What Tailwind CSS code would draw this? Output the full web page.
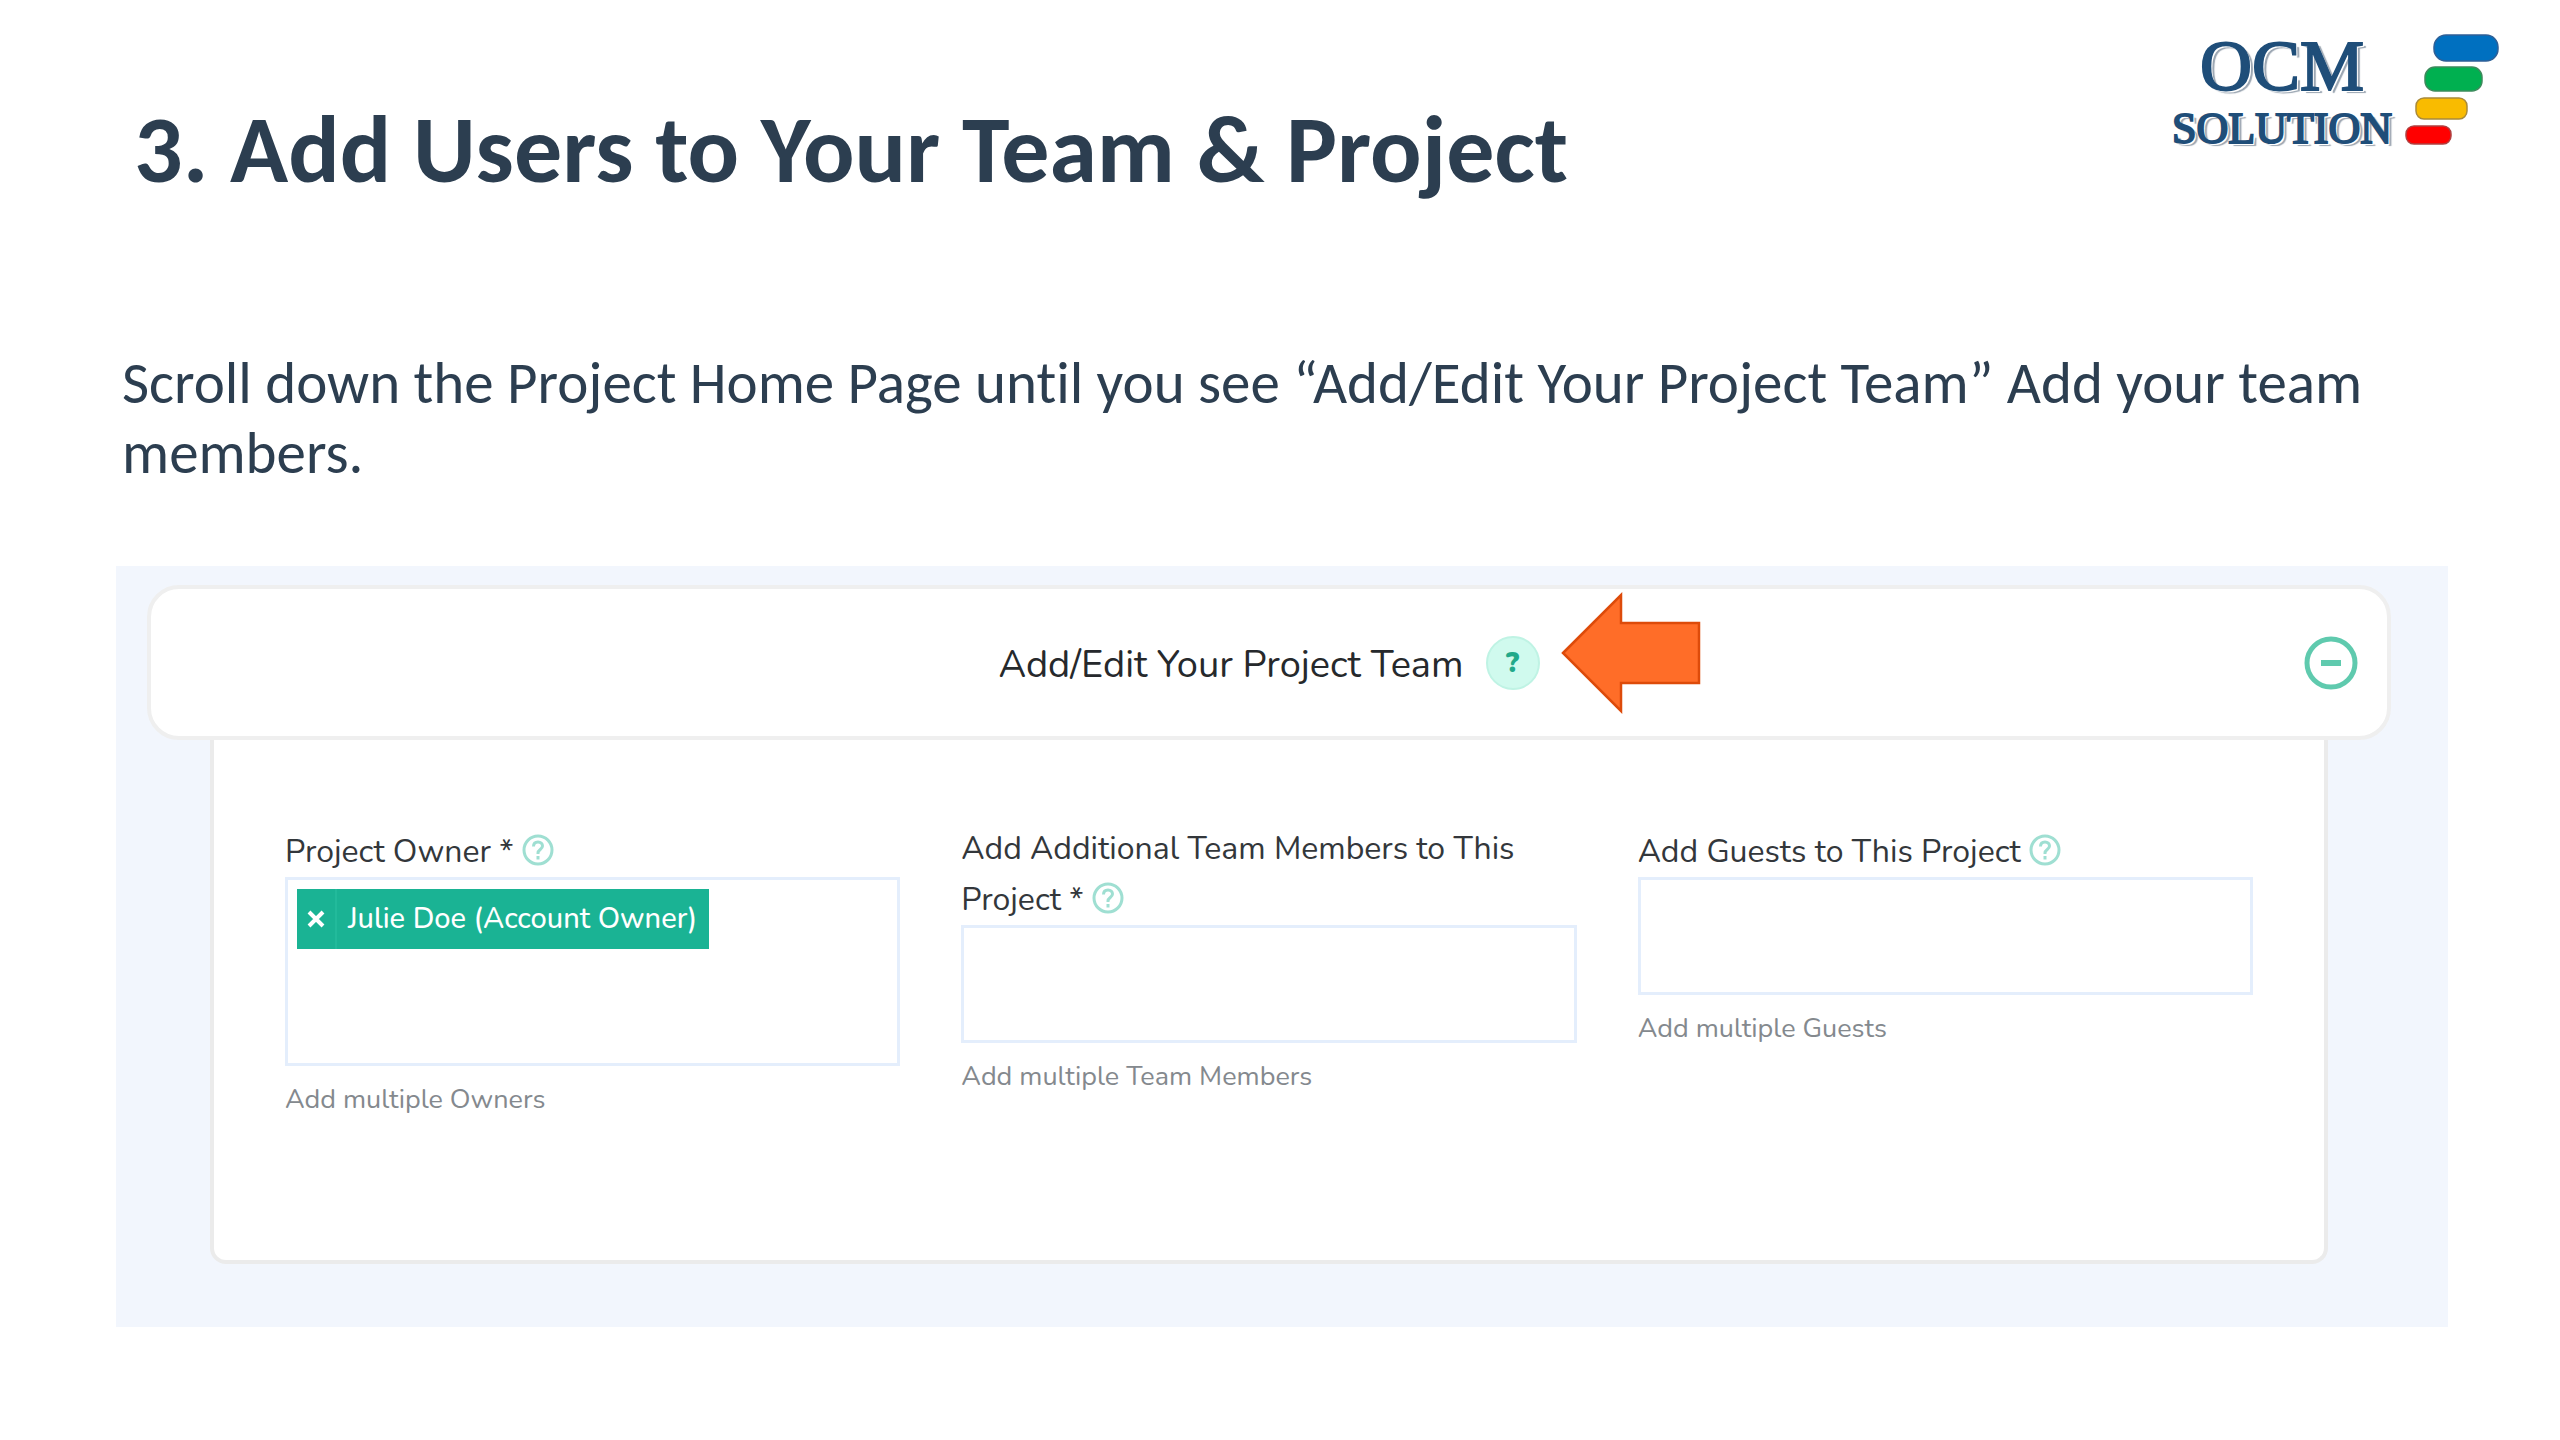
<!DOCTYPE html>
<html lang="en">
<head>
  <meta charset="UTF-8">
  <meta name="viewport" content="width=device-width, initial-scale=1">
  <title>Add Users to Your Team &amp; Project</title>
  <script src="https://cdn.jsdelivr.net/npm/@tailwindcss/browser@4"></script>
</head>
<body class="bg-white min-h-screen font-[Calibri,Carlito,Lato,sans-serif] text-[#2c3e50]">

  <!-- Slide header -->
  <header class="flex items-start justify-between pt-8 pl-[134px] pr-[60px]">
    <h1 class="pt-[70px] text-[96px] leading-[96px] font-bold">3. Add Users to Your Team &amp; Project</h1>

    <!-- Logo -->
    <div class="flex items-start gap-3">
      <div class="flex flex-col items-center gap-2 pt-1 font-['Liberation_Serif',serif] text-[#1f4e79] [-webkit-text-stroke:2px_#1f4e79] [text-shadow:2px_2px_0_#fff,4px_3px_1px_#9aa5b1]">
        <span class="text-[72px] leading-[60px]">OCM</span>
        <span class="text-[44px] leading-[50px]">SOLUTION</span>
      </div>
      <svg class="w-24 h-[114px]" viewBox="0 0 96 114" stroke-width="1.5" aria-hidden="true">
        <rect x="30" y="3" width="64" height="26" rx="12" fill="#0070c0" stroke="#2f5f96"/>
        <rect x="21" y="35" width="57" height="24" rx="10" fill="#00b050" stroke="#3d8a5c"/>
        <rect x="12" y="66" width="51" height="21" rx="8" fill="#f9bb00" stroke="#a98a3a"/>
        <rect x="2" y="94" width="45" height="18" rx="8" fill="#ff0000" stroke="#b04040"/>
      </svg>
    </div>
  </header>

  <main class="pl-[116px] pr-[112px]">
    <p class="mt-[150px] pl-[6px] text-[59px] leading-[70px] [font-variant-ligatures:none]">Scroll down the Project Home Page until you see “Add/Edit Your Project Team” Add your team members.</p>

    <!-- Project team panel -->
    <section class="mt-[78px] pt-[19px] pb-[63px] bg-[#f2f6fd] font-[Nunito,'Open_Sans',sans-serif] text-[#33373b]">
      <div class="ml-[31px] mr-[57px] h-[155px] px-[29px] grid grid-cols-[1fr_auto_1fr] items-center bg-white border-4 border-[#efefef] rounded-[32px]">
        <div class="relative col-start-2 flex items-center gap-[22px]">
          <h2 class="pt-1 text-[38px] leading-[52px] text-[#26292c]">Add/Edit Your Project Team</h2>
          <button type="button" aria-label="Help" class="size-[54px] rounded-full bg-[#d0faee] border-2 border-[#bff3e4] text-[28px] leading-none font-black text-[#22a98a]">?</button>
          <svg class="absolute left-full -bottom-6 ml-5 w-[142px] h-[124px]" viewBox="0 0 142 124" aria-hidden="true">
            <path d="M3 62 L61 4 V32 H139 V92 H61 V120 Z" fill="#ff6d28" stroke="#dd4b0a" stroke-width="2.5"/>
          </svg>
        </div>
        <button type="button" aria-label="Collapse" class="justify-self-end">
          <svg class="size-[54px]" viewBox="0 0 54 54" fill="none" stroke="#5fcaae" stroke-width="5">
            <circle cx="27" cy="27" r="24"/>
            <path d="M17 27 H37" stroke-width="6"/>
          </svg>
        </button>
      </div>

      <div class="ml-[94px] mr-[120px] pt-[85px] pb-[140px] px-[71px] grid grid-cols-3 gap-x-[61px] items-start bg-white border-4 border-t-0 border-[#ebebeb] rounded-b-2xl">
        <div>
          <div class="mb-px text-[32px] leading-[48px]">
            <label for="owner">Project Owner *</label>
            <button type="button" aria-label="About project owner" class="mt-[9px] align-[-4px]">
              <svg class="size-8" viewBox="0 0 32 32" fill="none" stroke="#9fdfd2" stroke-width="3">
                <circle cx="16" cy="16" r="14"/>
                <path d="M11.500 12.500 C11.500 9.500 13.500 8 16 8 C18.700 8 20.500 9.700 20.500 12 C20.500 15.500 16 15.500 16 19 V20"/>
                <path d="M16 22 V25.500"/>
              </svg>
            </button>
          </div>
          <div class="h-[189px] p-[9px] border-[3px] border-[#e4eefc]">
            <div class="flex flex-wrap">
              <span class="h-[60px] flex items-stretch bg-[#1ab394] text-white text-[29px] font-medium">
                <button type="button" aria-label="Remove Julie Doe" class="w-10 flex items-center justify-center border-r-2 border-[#22ba9b]">
                  <svg class="size-[18px]" viewBox="0 0 18 18" stroke="currentColor" stroke-width="4"><path d="M2 2 L16 16 M16 2 L2 16"/></svg>
                </button>
                <span class="self-center pl-[11px] pr-3">Julie Doe (Account Owner)</span>
              </span>
              <input id="owner" type="text" class="flex-1 min-w-0 px-2 text-[29px] outline-none">
            </div>
          </div>
          <p class="mt-[14px] text-[27px] leading-10 text-[#84898e]">Add multiple Owners</p>
        </div>

        <div>
          <div class="mb-px text-[32px] leading-[48px]">
            <label for="members">Add Additional Team Members to This Project *</label>
            <button type="button" aria-label="About team members" class="mt-[9px] align-[-4px]">
              <svg class="size-8" viewBox="0 0 32 32" fill="none" stroke="#9fdfd2" stroke-width="3">
                <circle cx="16" cy="16" r="14"/>
                <path d="M11.500 12.500 C11.500 9.500 13.500 8 16 8 C18.700 8 20.500 9.700 20.500 12 C20.500 15.500 16 15.500 16 19 V20"/>
                <path d="M16 22 V25.500"/>
              </svg>
            </button>
          </div>
          <input id="members" type="text" class="block w-full h-[118px] px-3 text-[29px] border-[3px] border-[#e4eefc] outline-none">
          <p class="mt-[14px] text-[27px] leading-10 text-[#84898e]">Add multiple Team Members</p>
        </div>

        <div>
          <div class="mb-px text-[32px] leading-[48px]">
            <label for="guests">Add Guests to This Project</label>
            <button type="button" aria-label="About guests" class="mt-[9px] align-[-4px]">
              <svg class="size-8" viewBox="0 0 32 32" fill="none" stroke="#9fdfd2" stroke-width="3">
                <circle cx="16" cy="16" r="14"/>
                <path d="M11.500 12.500 C11.500 9.500 13.500 8 16 8 C18.700 8 20.500 9.700 20.500 12 C20.500 15.500 16 15.500 16 19 V20"/>
                <path d="M16 22 V25.500"/>
              </svg>
            </button>
          </div>
          <input id="guests" type="text" class="block w-full h-[118px] px-3 text-[29px] border-[3px] border-[#e4eefc] outline-none">
          <p class="mt-[14px] text-[27px] leading-10 text-[#84898e]">Add multiple Guests</p>
        </div>
      </div>
    </section>
  </main>

</body>
</html>
